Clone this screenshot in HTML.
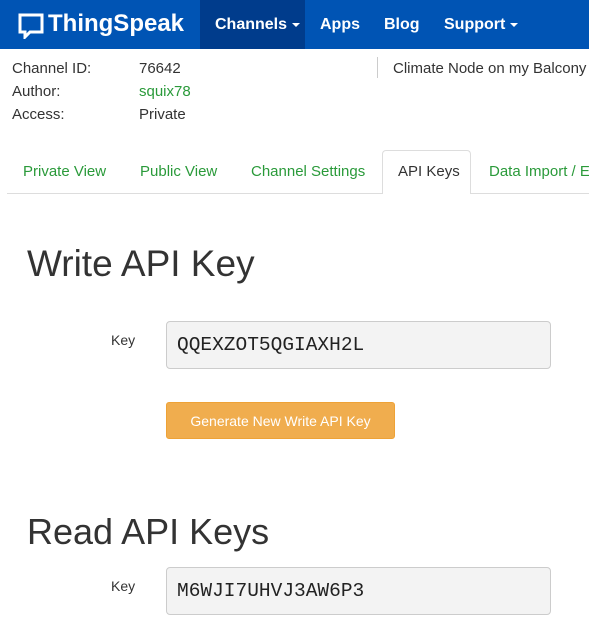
<!DOCTYPE html>
<html style="overflow:hidden"><head><style>
html,body{overflow:hidden}
body{margin:0;width:589px;height:631px;background:#fff;font-family:"Liberation Sans",sans-serif;position:relative;color:#333}
.a{position:absolute;white-space:nowrap}
.nav{position:absolute;left:0;top:0;width:589px;height:49px;background:#0054b4}
.nav .a{color:#fff;font-weight:bold;font-size:16px;top:15px;line-height:20px}
.car{display:inline-block;width:0;height:0;border-left:4px solid transparent;border-right:4px solid transparent;border-top:4px solid #fff;vertical-align:middle;margin-left:5px}
.inp{position:absolute;left:166px;width:385px;height:48px;background:#f3f3f3;border:1px solid #ccc;border-radius:4px;box-sizing:border-box;font-family:"Liberation Mono",monospace;font-size:19.5px;padding:12px 10px;color:#222}
.tab{font-size:15px;color:#2a9a3a;top:163px}
</style></head><body>
<div class="nav">
<div style="position:absolute;left:200px;top:0;width:105px;height:49px;background:#003c8c"></div>
<svg class="a" style="left:18px;top:13px" width="26" height="26" viewBox="0 0 26 26"><path d="M2 2H24V19H12L7 24V19H2Z" fill="none" stroke="#fff" stroke-width="3"/></svg>
<div class="a" style="left:48px;top:10px;font-size:24px;line-height:28px">ThingSpeak</div>
<div class="a" style="left:215px">Channels<span class="car"></span></div>
<div class="a" style="left:320px">Apps</div>
<div class="a" style="left:384px">Blog</div>
<div class="a" style="left:444px">Support<span class="car"></span></div>
</div>
<div class="a" style="left:12px;top:60px;font-size:15px">Channel ID:</div>
<div class="a" style="left:139px;top:60px;font-size:15px">76642</div>
<div class="a" style="left:12px;top:83px;font-size:15px">Author:</div>
<div class="a" style="left:139px;top:83px;font-size:15px;color:#2a9a3a">squix78</div>
<div class="a" style="left:12px;top:106px;font-size:15px">Access:</div>
<div class="a" style="left:139px;top:106px;font-size:15px">Private</div>
<div class="a" style="left:377px;top:57px;width:1px;height:21px;background:#ccc"></div>
<div class="a" style="left:393px;top:60px;font-size:15px;width:196px;overflow:hidden">Climate Node on my Balcony</div>
<div class="a" style="left:7px;top:193px;width:582px;height:1px;background:#ddd"></div>
<div class="a" style="left:382px;top:150px;width:89px;height:44px;border:1px solid #ddd;border-bottom:none;background:#fff;box-sizing:border-box;border-radius:4px 4px 0 0"></div>
<div class="a tab" style="left:23px">Private View</div>
<div class="a tab" style="left:140px">Public View</div>
<div class="a tab" style="left:251px">Channel Settings</div>
<div class="a tab" style="left:398px;color:#333">API Keys</div>
<div class="a tab" style="left:489px;width:100px;overflow:hidden">Data Import / Export</div>
<div class="a" style="left:27px;top:243px;font-size:37px;color:#333">Write API Key</div>
<div class="a" style="left:111px;top:332px;font-size:14px">Key</div>
<div class="inp" style="top:321px">QQEXZOT5QGIAXH2L</div>
<div class="a" style="left:166px;top:402px;width:229px;height:37px;background:#f0ad4e;border:1px solid #eea236;box-sizing:border-box;border-radius:3px;color:#fff;font-size:14px;text-align:center;line-height:36px">Generate New Write API Key</div>
<div class="a" style="left:27px;top:511px;font-size:36px;color:#333">Read API Keys</div>
<div class="a" style="left:111px;top:578px;font-size:14px">Key</div>
<div class="inp" style="top:567px">M6WJI7UHVJ3AW6P3</div>
</body></html>
